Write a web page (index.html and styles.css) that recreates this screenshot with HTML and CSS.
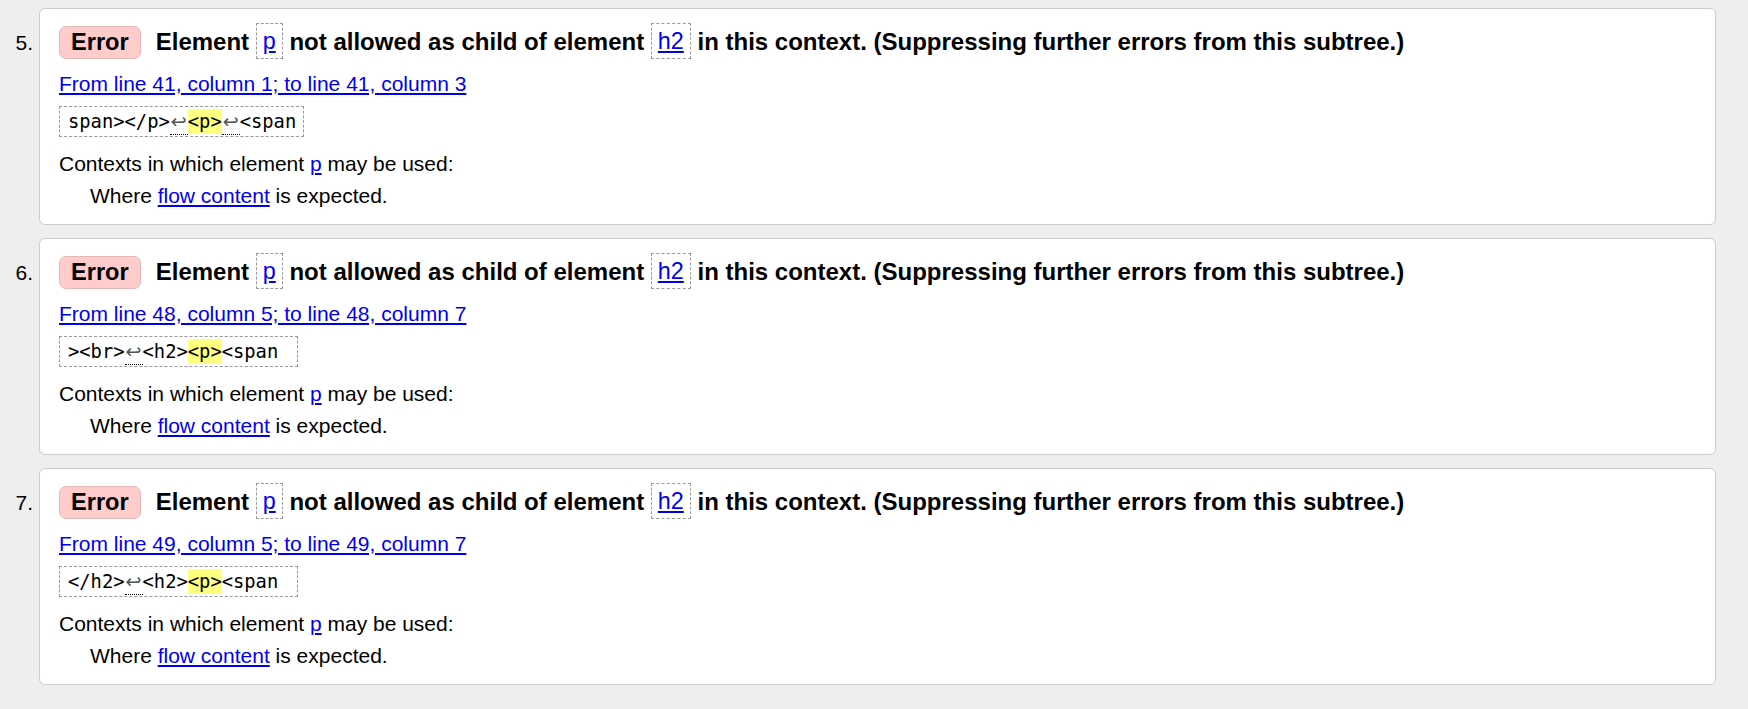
FILE: index.html
```html
<!DOCTYPE html>
<html lang="en">
<head>
<meta charset="utf-8">
<title>Validation messages</title>
<link rel="stylesheet" href="styles.css">
</head>
<body>
<ol class="messages">
  <li class="message">
    <span class="num">5.</span>
    <div class="card">
      <p class="heading"><span class="badge">Error</span><span class="msg">Element <code class="tag"><a href="#p">p</a></code> not allowed as child of element <code class="tag"><a href="#h2">h2</a></code> in this context. (Suppressing further errors from this subtree.)</span></p>
      <p class="location"><a href="#l41">From line 41, column 1; to line 41, column 3</a></p>
      <p class="extract-row"><code class="extract">span&gt;&lt;/p&gt;<span class="lf">↩</span><mark class="hl">&lt;p&gt;</mark><span class="lf">↩</span>&lt;span</code></p>
      <div class="contexts">
        <p>Contexts in which element <a href="#p">p</a> may be used:</p>
        <p class="indent">Where <a href="#flow">flow content</a> is expected.</p>
      </div>
    </div>
  </li>
  <li class="message">
    <span class="num">6.</span>
    <div class="card">
      <p class="heading"><span class="badge">Error</span><span class="msg">Element <code class="tag"><a href="#p">p</a></code> not allowed as child of element <code class="tag"><a href="#h2">h2</a></code> in this context. (Suppressing further errors from this subtree.)</span></p>
      <p class="location"><a href="#l48">From line 48, column 5; to line 48, column 7</a></p>
      <p class="extract-row"><code class="extract extract--wide">&gt;&lt;br&gt;<span class="lf">↩</span>&lt;h2&gt;<mark class="hl">&lt;p&gt;</mark>&lt;span</code></p>
      <div class="contexts">
        <p>Contexts in which element <a href="#p">p</a> may be used:</p>
        <p class="indent">Where <a href="#flow">flow content</a> is expected.</p>
      </div>
    </div>
  </li>
  <li class="message">
    <span class="num">7.</span>
    <div class="card">
      <p class="heading"><span class="badge">Error</span><span class="msg">Element <code class="tag"><a href="#p">p</a></code> not allowed as child of element <code class="tag"><a href="#h2">h2</a></code> in this context. (Suppressing further errors from this subtree.)</span></p>
      <p class="location"><a href="#l49">From line 49, column 5; to line 49, column 7</a></p>
      <p class="extract-row"><code class="extract extract--wide">&lt;/h2&gt;<span class="lf">↩</span>&lt;h2&gt;<mark class="hl">&lt;p&gt;</mark>&lt;span</code></p>
      <div class="contexts">
        <p>Contexts in which element <a href="#p">p</a> may be used:</p>
        <p class="indent">Where <a href="#flow">flow content</a> is expected.</p>
      </div>
    </div>
  </li>
</ol>
</body>
</html>
```

FILE: styles.css
```css
html, body {
  margin: 0;
  padding: 0;
  background: #eeeeee;
}
body {
  font-family: "Liberation Sans", Arial, sans-serif;
  font-size: 21px;
  color: #000;
  padding-top: 8px;
}
p { margin: 0; }
a { color: #0000ee; text-decoration: underline; }

.messages {
  list-style: none;
  margin: 0;
  padding: 0 32px 0 0;
}
.message {
  display: flex;
  align-items: flex-start;
  margin-bottom: 13px;
}
.num {
  width: 33px;
  flex: 0 0 33px;
  padding-right: 6px;
  text-align: right;
  padding-top: 23px;
  line-height: 24px;
}
.card {
  flex: 1 1 auto;
  box-sizing: border-box;
  height: 217px;
  background: #fff;
  border: 1px solid #cccccc;
  border-radius: 6px;
  padding: 14px 19px 12px 19px;
}

.heading {
  display: flex;
  align-items: center;
  gap: 15px;
  height: 38px;
  font-weight: bold;
  font-size: 24px;
  white-space: nowrap;
}
.badge {
  display: inline-block;
  box-sizing: border-box;
  height: 33px;
  line-height: 31px;
  padding: 0 11px;
  background: #ffcccc;
  border: 1px solid #e4b8b8;
  border-radius: 7px;
  font-size: 23.6px;
}
.msg { line-height: 38px; }
.tag {
  display: inline-block;
  box-sizing: border-box;
  height: 36px;
  line-height: 34px;
  padding: 0 6px;
  border: 1px dashed #999999;
  font-family: "Liberation Sans", Arial, sans-serif;
  font-weight: normal;
  font-size: 23.4px;
  vertical-align: middle;
  position: relative;
  top: -2px;
}

.location {
  margin-top: 9px;
  line-height: 28px;
}

.extract-row {
  margin-top: 8px;
  line-height: 0;
}
.extract {
  display: inline-block;
  box-sizing: border-box;
  height: 31px;
  line-height: 29px;
  padding: 0 7px 0 8px;
  border: 1px dashed #999999;
  font-family: "DejaVu Sans Mono", monospace;
  font-size: 18.8px;
  white-space: pre;
}
.extract--wide { padding-right: 19px; }
.lf {
  display: inline-block;
  width: 18px;
  line-height: 19px;
  padding-bottom: 3px;
  text-align: center;
  font-family: "DejaVu Sans", sans-serif;
  font-size: 19px;
  color: #555;
  border-bottom: 1px dotted #000;
  vertical-align: baseline;
}
.hl {
  background: #ffff80;
  color: #000;
  padding: 2px 0;
}

.contexts {
  margin-top: 11px;
  line-height: 31.5px;
}
.indent { padding-left: 31px; }
```
